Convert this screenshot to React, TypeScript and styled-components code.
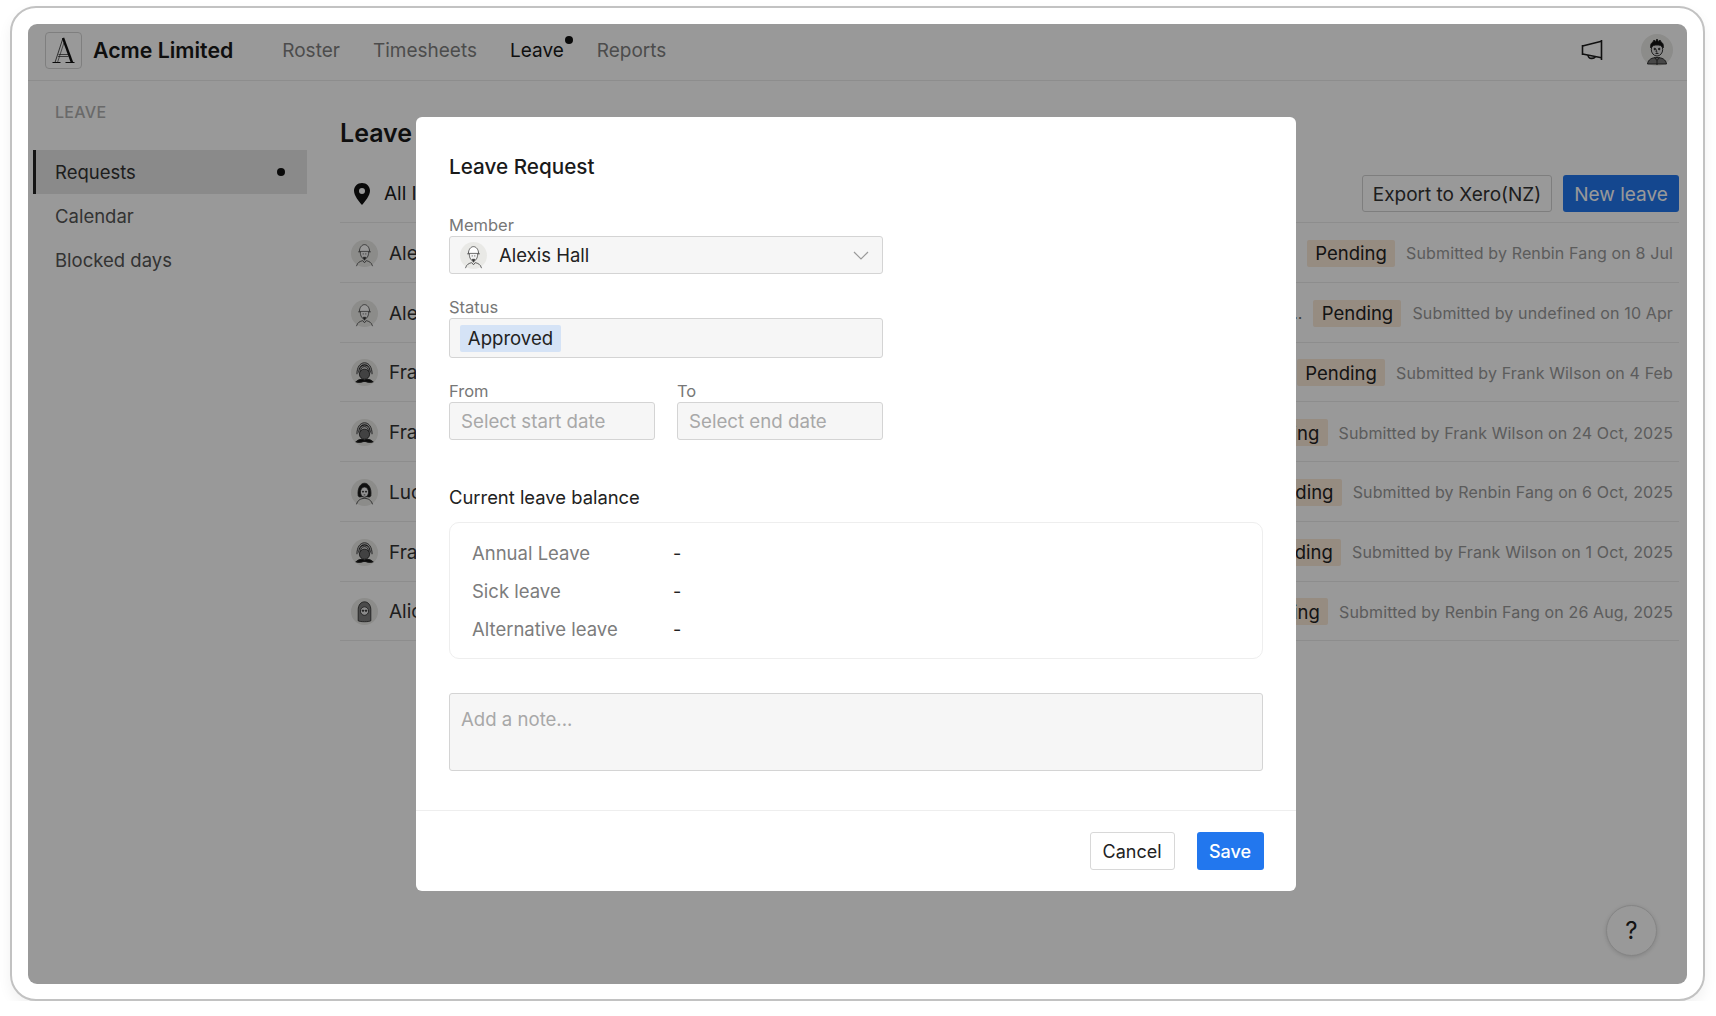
import styled, { createGlobalStyle } from 'styled-components';

const GlobalStyle = createGlobalStyle`
  html, body {
    margin: 0;
    padding: 0;
    background: #fff;
    font-family: Inter, 'Liberation Sans', sans-serif;
    color: #1a1a1a;
  }
  * {
    box-sizing: border-box;
  }
`;

type Person = 'alexis' | 'frank' | 'lucy' | 'alice' | 'owner';

const rows: { name: string; who: Person; note?: string; by: string }[] = [
  { name: 'Alexis Hall', who: 'alexis', by: 'Submitted by Renbin Fang on 8 Jul' },
  { name: 'Alexis Hall', who: 'alexis', note: '..', by: 'Submitted by undefined on 10 Apr' },
  { name: 'Frank Wilson', who: 'frank', by: 'Submitted by Frank Wilson on 4 Feb' },
  { name: 'Frank Wilson', who: 'frank', by: 'Submitted by Frank Wilson on 24 Oct, 2025' },
  { name: 'Lucy Chen', who: 'lucy', by: 'Submitted by Renbin Fang on 6 Oct, 2025' },
  { name: 'Frank Wilson', who: 'frank', by: 'Submitted by Frank Wilson on 1 Oct, 2025' },
  { name: 'Alice Moore', who: 'alice', by: 'Submitted by Renbin Fang on 26 Aug, 2025' },
];

function Avatar({ who, size }: { who: Person; size: number }) {
  return (
    <svg width={size} height={size} viewBox="0 0 32 32" style={{ flex: 'none' }}>
      <circle cx="16" cy="16" r="16" fill="#e9e9e6" />
      {who === 'alexis' && (
        <g fill="none" stroke="#3a3a3a" strokeWidth="0.9">
          <path d="M10 13.500c0-4.500 2.800-8 6-8s6 3.500 6 8z" fill="#fff" />
          <path d="M8.500 14h15" />
          <path d="M11 14c0 5 2.300 8.500 5 8.500s5-3.500 5-8.500" fill="#f4f4f4" />
          <path d="M13.800 16.500h1.400M16.800 16.500h1.400" />
          <path d="M14.500 20.500l1.500 3.500 1.500-3.500z" fill="#333" />
          <path d="M6.500 31c1-4.500 4.500-6 7.500-6.500l2 2.500 2-2.500c3 .5 6.500 2 7.500 6.500" />
        </g>
      )}
      {who === 'frank' && (
        <g fill="none" stroke="#222" strokeWidth="1">
          <path d="M7 18C7 10 10.500 4.500 16 4.500S25 10 25 18" fill="#d4d4d4" />
          <path d="M9.200 16c0-5.500 2.800-9 6.800-9s6.800 3.500 6.800 9" strokeWidth="1.300" />
          <path d="M11.200 15c0-3.800 2-6 4.800-6s4.800 2.200 4.800 6" />
          <ellipse cx="16" cy="18" rx="6" ry="6" fill="#6e6e6e" />
          <path d="M6 27c3.500-3.200 7-3.700 10-1.800 3-1.900 6.500-1.400 10 1.800-3.500 1.500-6 .7-10-.7-4 1.400-6.500 2.200-10 .7z" fill="#111" strokeWidth="1.200" />
        </g>
      )}
      {who === 'lucy' && (
        <g fill="none" stroke="#222" strokeWidth="0.9">
          <path d="M8.500 20c-1.200-9.500 3-15 7.500-15s8.700 5.500 7.500 15c-1 1.500-2 1.500-3.500 1h-8c-1.500.5-2.500.5-3.500-1z" fill="#1c1c1c" />
          <ellipse cx="16" cy="15.500" rx="4.800" ry="6" fill="#f2f2f2" />
          <circle cx="14.200" cy="15" r=".7" fill="#222" />
          <circle cx="17.800" cy="15" r=".7" fill="#222" />
          <path d="M15 18.800h2" />
          <path d="M6.500 30c1.500-5 5-7 9.500-7s8 2 9.500 7" />
        </g>
      )}
      {who === 'alice' && (
        <g fill="none" stroke="#222" strokeWidth="0.9">
          <path d="M8.500 27V14c0-6 3.500-9.500 7.500-9.500s7.500 3.500 7.500 9.500v13c-2.500 1.500-12.500 1.500-15 0z" fill="#7d7d7d" />
          <ellipse cx="16" cy="15.500" rx="4.800" ry="5" fill="#e6e6e6" />
          <circle cx="14.200" cy="15" r=".9" fill="#222" />
          <circle cx="17.800" cy="15" r=".9" fill="#222" />
        </g>
      )}
      {who === 'owner' && (
        <g fill="none" stroke="#222" strokeWidth="0.9">
          <path d="M6.500 30c.5-4.500 4.500-6.500 9.500-6.500s9 2 9.500 6.500z" fill="#777" />
          <path d="M13.500 23.500l2.500 3 2.500-3M16 26.500V31" />
          <ellipse cx="16" cy="15.500" rx="5.700" ry="6.500" fill="#ddd" />
          <path d="M9.800 14c-.8-3.500.8-5.500 2.200-6l1-2 1.500 1.500L16 5l1.500 2.500L19 6l1 2c1.500.5 3 2.500 2.200 6-1.500-2.500-3.500-3-6.200-3s-4.700.5-6.200 3z" fill="#111" />
          <circle cx="13.800" cy="15" r=".8" fill="#222" />
          <circle cx="18.200" cy="15" r=".8" fill="#222" />
          <path d="M15.500 15.500l-.5 2.500h1.500M14.500 19.500h3" />
        </g>
      )}
    </svg>
  );
}

function LogoMark() {
  return (
    <svg width="26" height="28" viewBox="1 0 26 28" fill="none">
      <path d="M2.500 26.500h8M15.500 26.500h9" stroke="#111" strokeWidth="1.200" />
      <path d="M5 26.500L13 2" stroke="#222" strokeWidth="0.800" />
      <path d="M7.500 26.500L14 6.500" stroke="#222" strokeWidth="0.600" />
      <path d="M13 2l9 24.500" stroke="#111" strokeWidth="2.400" />
      <path d="M8.500 18.500h9.500M8 20.500h10.500" stroke="#222" strokeWidth="0.700" />
    </svg>
  );
}

function MegaphoneIcon() {
  return (
    <svg width="22" height="22" viewBox="0 0 22 22" fill="none" stroke="#1c1c1c" strokeWidth="1.600">
      <path d="M1.500 6v10M20.500 1v20" />
      <path d="M1.500 7L20.500 2.200M1.500 15L20.500 18.800" />
      <path d="M7 16c.2 2.400 2 3.500 3.800 3.400 1.700-.1 3.200-1 3.500-2.200" />
    </svg>
  );
}

function PinIcon() {
  return (
    <svg width="18" height="22" viewBox="0 0 18 22">
      <path
        fillRule="evenodd"
        d="M9 0c4.700 0 8 3.400 8 7.800 0 4.800-4.600 10.400-8 14.200C5.600 18.200 1 12.600 1 7.800 1 3.400 4.300 0 9 0zm0 5a3 3 0 1 0 0 6 3 3 0 0 0 0-6z"
        fill="#111"
      />
    </svg>
  );
}

function ChevronIcon() {
  return (
    <svg width="16" height="9" viewBox="0 0 16 9" fill="none" stroke="#9a9a9a" strokeWidth="1.200">
      <path d="M1 1l7 7 7-7" />
    </svg>
  );
}

export default function App() {
  return (
    <>
      <GlobalStyle />
      <Frame>
        <Shell>
          <TopBar>
            <LogoBox>
              <LogoMark />
            </LogoBox>
            <Company>Acme Limited</Company>
            <Nav>
              <NavLink>Roster</NavLink>
              <NavLink>Timesheets</NavLink>
              <NavLink $active>
                Leave
                <NavDot />
              </NavLink>
              <NavLink>Reports</NavLink>
            </Nav>
            <TopActions>
              <MegaphoneIcon />
              <Avatar who="owner" size={32} />
            </TopActions>
          </TopBar>
          <Body>
            <Sidebar>
              <SideHeading>LEAVE</SideHeading>
              <SideItem $active>
                Requests
                <SideDot />
              </SideItem>
              <SideItem>Calendar</SideItem>
              <SideItem>Blocked days</SideItem>
            </Sidebar>
            <Main>
              <PageTitle>Leave Requests</PageTitle>
              <FilterBar>
                <LocationFilter>
                  <PinIcon />
                  All locations
                </LocationFilter>
                <OutlineButton>Export to Xero(NZ)</OutlineButton>
                <PrimaryButton>New leave</PrimaryButton>
              </FilterBar>
              <RequestList>
                {rows.map((row, i) => (
                  <RequestRow key={i}>
                    <Avatar who={row.who} size={27} />
                    <MemberName>{row.name}</MemberName>
                    {row.note && <RowNote>{row.note}</RowNote>}
                    <PendingTag>Pending</PendingTag>
                    <Submitted>{row.by}</Submitted>
                  </RequestRow>
                ))}
              </RequestList>
            </Main>
          </Body>
          <HelpButton>?</HelpButton>
          <Overlay>
            <Modal>
              <ModalBody>
                <ModalTitle>Leave Request</ModalTitle>
                <FieldLabel>Member</FieldLabel>
                <SelectBox>
                  <Avatar who="alexis" size={27} />
                  <SelectValue>Alexis Hall</SelectValue>
                  <ChevronIcon />
                </SelectBox>
                <FieldLabel $top={23}>Status</FieldLabel>
                <StatusBox>
                  <StatusTag>Approved</StatusTag>
                </StatusBox>
                <DateFields>
                  <div>
                    <FieldLabel>From</FieldLabel>
                    <DateInput>Select start date</DateInput>
                  </div>
                  <div>
                    <FieldLabel>To</FieldLabel>
                    <DateInput>Select end date</DateInput>
                  </div>
                </DateFields>
                <SectionTitle>Current leave balance</SectionTitle>
                <BalanceCard>
                  <BalanceLabel>Annual Leave</BalanceLabel>
                  <BalanceValue>-</BalanceValue>
                  <BalanceLabel>Sick leave</BalanceLabel>
                  <BalanceValue>-</BalanceValue>
                  <BalanceLabel>Alternative leave</BalanceLabel>
                  <BalanceValue>-</BalanceValue>
                </BalanceCard>
                <NoteBox>Add a note...</NoteBox>
              </ModalBody>
              <ModalFooter>
                <CancelButton>Cancel</CancelButton>
                <SaveButton>Save</SaveButton>
              </ModalFooter>
            </Modal>
          </Overlay>
        </Shell>
      </Frame>
    </>
  );
}

const Frame = styled.div`
  width: 1695px;
  height: 995px;
  margin: 6px 0 0 10px;
  padding: 16px 16px 15px 16px;
  background: #fff;
  border: 2px solid #c2c2c2;
  border-radius: 26px;
  box-shadow: 0 6px 14px rgba(0, 0, 0, 0.06);
`;

const Shell = styled.div`
  position: relative;
  height: 960px;
  background: #fff;
  border-radius: 9px;
  overflow: hidden;
`;

const TopBar = styled.header`
  display: flex;
  align-items: center;
  height: 57px;
  padding: 0 14px 4px 17px;
  border-bottom: 1px solid #ececec;
`;

const LogoBox = styled.div`
  display: flex;
  align-items: center;
  justify-content: center;
  width: 37px;
  height: 37px;
  border: 1.5px solid #d4d4d4;
  border-radius: 4px;
`;

const Company = styled.div`
  margin-left: 11px;
  font-size: 21.3px;
  font-weight: 600;
  color: #1a1a1a;
`;

const Nav = styled.nav`
  display: flex;
  align-items: center;
  gap: 33px;
  margin-left: 49px;
`;

const NavLink = styled.a<{ $active?: boolean }>`
  position: relative;
  font-size: 19px;
  font-weight: 400;
  color: ${(p) => (p.$active ? '#1a1a1a' : '#7f7f7f')};
`;

const NavDot = styled.span`
  position: absolute;
  top: -3px;
  right: -9px;
  width: 8px;
  height: 8px;
  border-radius: 50%;
  background: #111;
`;

const TopActions = styled.div`
  display: flex;
  align-items: center;
  gap: 38px;
  margin-left: auto;
`;

const Body = styled.div`
  display: flex;
  height: 902px;
`;

const Sidebar = styled.aside`
  width: 274px;
  margin-left: 5px;
  padding-top: 20px;
`;

const SideHeading = styled.div`
  height: 24px;
  margin-bottom: 25px;
  padding-left: 22px;
  font-size: 16px;
  font-weight: 500;
  line-height: 22px;
  letter-spacing: 0.3px;
  color: #b0b0b0;
`;

const SideItem = styled.div<{ $active?: boolean }>`
  display: flex;
  align-items: center;
  justify-content: space-between;
  height: 44px;
  padding: 0 22px 0 ${(p) => (p.$active ? 19 : 22)}px;
  font-size: 18.5px;
  color: ${(p) => (p.$active ? '#333' : '#555')};
  background: ${(p) => (p.$active ? '#e6e6e6' : 'transparent')};
  border-left: ${(p) => (p.$active ? '3px solid #222' : 'none')};
`;

const SideDot = styled.span`
  width: 8px;
  height: 8px;
  border-radius: 50%;
  background: #111;
`;

const Main = styled.main`
  flex: 1;
  margin-left: 33px;
  margin-right: 8px;
  padding-top: 35px;
`;

const PageTitle = styled.h1`
  margin: 0;
  height: 35px;
  font-size: 25px;
  font-weight: 600;
  line-height: 35px;
  color: #1a1a1a;
`;

const FilterBar = styled.div`
  display: flex;
  align-items: center;
  gap: 11px;
  margin-top: 24px;
  padding-bottom: 10px;
  border-bottom: 1px solid #ececec;
`;

const LocationFilter = styled.div`
  display: flex;
  align-items: center;
  gap: 13px;
  margin-left: 13px;
  margin-right: auto;
  font-size: 19px;
`;

const OutlineButton = styled.button`
  height: 37px;
  width: 190px;
  padding: 1px 0 0;
  font: inherit;
  font-size: 19px;
  color: #333;
  background: #fff;
  border: 1.5px solid #d2d2d2;
  border-radius: 3px;
`;

const PrimaryButton = styled.button`
  height: 37px;
  width: 116px;
  padding: 1px 0 0;
  font: inherit;
  font-size: 19px;
  color: #fff;
  background: #2277ee;
  border: none;
  border-radius: 3px;
`;

const RequestList = styled.div`
  display: flex;
  flex-direction: column;
`;

const RequestRow = styled.div`
  display: flex;
  align-items: center;
  height: 59.75px;
  padding: 2px 6px 0 11px;
  border-bottom: 1px solid #ececec;
`;

const MemberName = styled.span`
  margin-left: 11px;
  margin-right: auto;
  font-size: 19px;
  color: #333;
`;

const RowNote = styled.span`
  margin-right: 11px;
  font-size: 16px;
  color: #666;
`;

const PendingTag = styled.span`
  display: flex;
  align-items: center;
  justify-content: center;
  width: 88px;
  height: 27px;
  border-radius: 2px;
  font-size: 18.5px;
  color: #222;
  background: #fbe9d8;
`;

const Submitted = styled.span`
  margin-left: 11px;
  font-size: 16px;
  letter-spacing: 0.13px;
  color: #999;
`;

const HelpButton = styled.div`
  position: absolute;
  right: 30px;
  bottom: 28px;
  display: flex;
  align-items: center;
  justify-content: center;
  width: 51px;
  height: 51px;
  font-size: 24px;
  color: #222;
  background: #fff;
  border: 1.5px solid #ddd;
  border-radius: 50%;
  box-shadow: 0 1px 4px rgba(0, 0, 0, 0.15);
`;

const Overlay = styled.div`
  position: absolute;
  inset: 0;
  padding: 93px 0 0 388px;
  background: rgba(0, 0, 0, 0.4);
`;

const Modal = styled.div`
  width: 880px;
  height: 774px;
  background: #fff;
  border-radius: 6px;
`;

const ModalBody = styled.div`
  height: 694px;
  padding: 36px 33px 0 33px;
  border-bottom: 1px solid #eee;
`;

const ModalTitle = styled.h2`
  margin: 0 0 34px;
  height: 28px;
  font-size: 20.7px;
  font-weight: 500;
  line-height: 28px;
  color: #1a1a1a;
`;

const FieldLabel = styled.div<{ $top?: number }>`
  height: 21px;
  margin-top: ${(p) => p.$top ?? 0}px;
  font-size: 16.5px;
  line-height: 20px;
  color: #777;
`;

const SelectBox = styled.div`
  display: flex;
  align-items: center;
  width: 434px;
  height: 38px;
  padding: 0 13px 0 10px;
  background: #f6f6f6;
  border: 1.5px solid #d4d4d4;
  border-radius: 3px;
`;

const SelectValue = styled.span`
  flex: 1;
  margin-left: 12px;
  font-size: 18.5px;
  color: #222;
`;

const StatusBox = styled.div`
  display: flex;
  align-items: center;
  width: 434px;
  height: 40px;
  padding: 0 10px;
  background: #f6f6f6;
  border: 1.5px solid #d4d4d4;
  border-radius: 3px;
`;

const StatusTag = styled.span`
  display: flex;
  align-items: center;
  justify-content: center;
  width: 101px;
  height: 27px;
  font-size: 18.6px;
  color: #222;
  background: #d5e3f6;
  border-radius: 2px;
`;

const DateFields = styled.div`
  display: grid;
  grid-template-columns: 206px 206px;
  gap: 22px;
  margin-top: 23px;
`;

const DateInput = styled.div`
  display: flex;
  align-items: center;
  height: 38px;
  padding: 0 11px;
  font-size: 18.7px;
  color: #a8a8a8;
  background: #f6f6f6;
  border: 1.5px solid #d4d4d4;
  border-radius: 3px;
`;

const SectionTitle = styled.div`
  height: 24px;
  margin-top: 45px;
  font-size: 18.4px;
  line-height: 24px;
  color: #222;
`;

const BalanceCard = styled.div`
  display: grid;
  grid-template-columns: 201px 1fr;
  grid-auto-rows: 38px;
  align-items: center;
  height: 137px;
  margin-top: 13px;
  padding: 11px 22px;
  border: 1.5px solid #eee;
  border-radius: 10px;
`;

const BalanceLabel = styled.span`
  font-size: 18.5px;
  color: #7c7c7c;
`;

const BalanceValue = styled.span`
  font-size: 18px;
  color: #222;
`;

const NoteBox = styled.div`
  height: 78px;
  margin-top: 34px;
  padding: 14px 11px;
  font-size: 18.6px;
  line-height: 22px;
  color: #a8a8a8;
  background: #f6f6f6;
  border: 1.5px solid #d4d4d4;
  border-radius: 3px;
`;

const ModalFooter = styled.div`
  display: flex;
  justify-content: flex-end;
  gap: 22px;
  padding: 21px 32.5px 0 0;
`;

const CancelButton = styled.button`
  width: 85px;
  height: 38px;
  padding: 0;
  font: inherit;
  font-size: 18px;
  color: #222;
  background: #fff;
  border: 1.5px solid #d8d8d8;
  border-radius: 3px;
`;

const SaveButton = styled.button`
  width: 67px;
  height: 38px;
  padding: 0;
  font: inherit;
  font-size: 18px;
  font-weight: 500;
  color: #fff;
  background: #2277ee;
  border: none;
  border-radius: 3px;
`;
